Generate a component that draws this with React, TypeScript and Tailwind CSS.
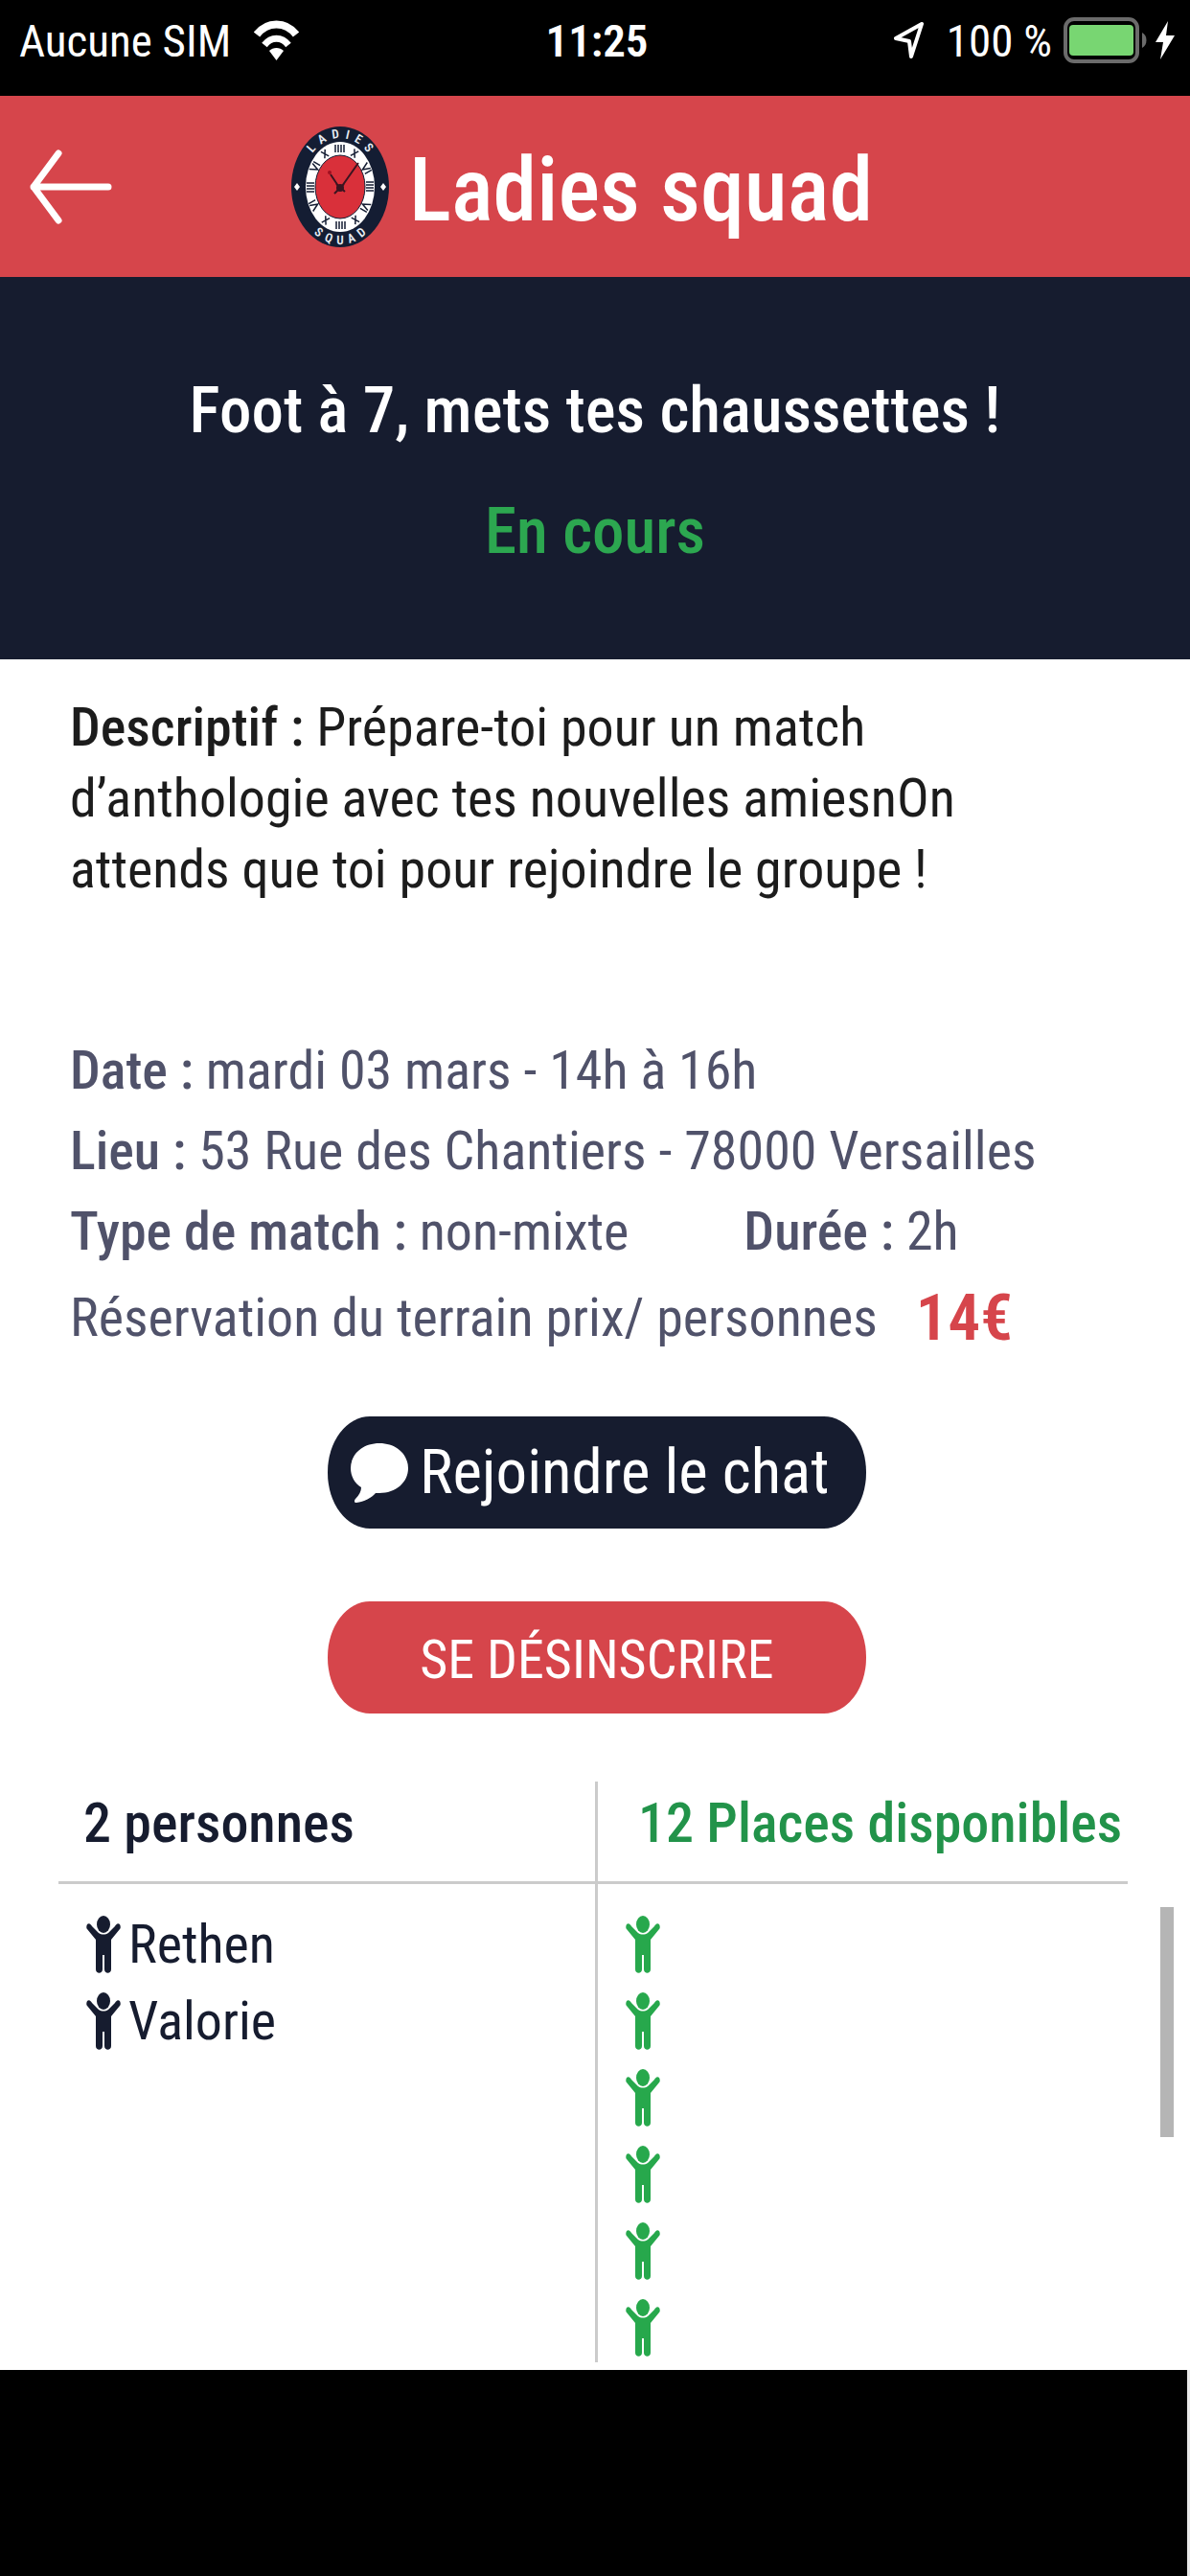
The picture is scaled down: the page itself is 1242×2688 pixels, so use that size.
import type { ReactNode } from "react";

const players = ["Rethen", "Valorie"];
const visibleRows = 6;

const hours = Array.from({ length: 12 }, (_, i) => i);

function StatusBar() {
  return (
    <div className="grid h-[100px] grid-cols-[1fr_auto_1fr] items-center bg-black pr-4 pb-4 pl-5 text-[47px] leading-none text-white">
      <div className="flex items-center gap-6">
        <span>Aucune SIM</span>
        <svg viewBox="0 0 47 42" className="h-[42px] w-[47px]" aria-hidden="true">
          <g fill="none" stroke="white" strokeWidth="8">
            <path d="M3 15C14 1 33 1 44 15" />
            <path d="M11 26C18 17 29 17 36 26" strokeWidth="7" />
          </g>
          <path d="M23.500 42L16 32C20 28 27 28 31 32Z" fill="white" />
        </svg>
      </div>
      <span className="font-semibold">11:25</span>
      <div className="flex items-center justify-end">
        <svg viewBox="0 0 31 38" className="mr-6 h-[38px] w-[31px]" aria-hidden="true">
          <path d="M29 2L2 17L16 20L18 36Z" fill="none" stroke="white" strokeWidth="4" strokeLinejoin="round" />
        </svg>
        <span className="mr-3">100 %</span>
        <svg viewBox="0 0 88 48" className="mr-2 h-12 w-[88px]" aria-hidden="true">
          <rect x="2" y="2" width="75" height="44" rx="9" fill="none" stroke="#6b6b6b" strokeWidth="4" />
          <rect x="6" y="8" width="67" height="32" rx="4" fill="#78d672" />
          <path d="M82 16C88 19 88 29 82 32Z" fill="#6b6b6b" />
        </svg>
        <svg viewBox="0 0 20 40" className="h-10 w-5" aria-hidden="true">
          <path d="M13 0L0 22H8L5 40L20 15H11Z" fill="white" />
        </svg>
      </div>
    </div>
  );
}

function Logo() {
  return (
    <svg viewBox="0 0 104 128" className="h-32 w-[104px] shrink-0" aria-hidden="true">
      <defs>
        <path id="logo-top" d="M12 64A40 51 0 0 1 92 64" />
        <path id="logo-bottom" d="M5 64A47 60 0 0 0 99 64" />
      </defs>
      <ellipse cx="52" cy="64" rx="51" ry="63" fill="#141d33" />
      <ellipse cx="52" cy="64" rx="36" ry="47" fill="white" />
      <ellipse cx="52" cy="64" rx="26" ry="33" fill="#d9303a" stroke="#141d33" strokeWidth="1" />
      {hours.map((hour) => {
        const angle = (hour * Math.PI) / 6;
        const x = 52 + Math.sin(angle) * 31;
        const y = 64 - Math.cos(angle) * 40;
        return (
          <g key={hour} transform={`translate(${x} ${y}) rotate(${hour * 30})`} stroke="#141d33" strokeWidth="1.500" fill="none">
            <path d={hour % 3 === 0 ? "M-5 -4V4M-2 -4V4M1 -4V4M4 -4V4" : hour % 2 === 0 ? "M-4 -4L0 4L3 -4M5 -4V4" : "M-3 -4L2 4M2 -4L-3 4"} />
          </g>
        );
      })}
      <path d="M52 66L71 39M52 66L42 51M46 71L56 61M48 61L57 69" stroke="#3a1420" strokeWidth="2" fill="none" />
      <circle cx="41" cy="49" r="2" fill="#a01020" />
      <circle cx="52" cy="65" r="4" fill="#3a1420" />
      <path d="M7 60L10 64L7 68L4 64ZM97 60L100 64L97 68L94 64Z" fill="white" />
      <g fill="#e9edf5" fontSize="13" fontWeight="600" textAnchor="middle">
        <text>
          <textPath href="#logo-top" startOffset="50%">L{"\u00a0\u00a0"}A{"\u00a0\u00a0"}D{"\u00a0\u00a0"}I{"\u00a0\u00a0"}E{"\u00a0\u00a0"}S</textPath>
        </text>
        <text>
          <textPath href="#logo-bottom" startOffset="50%">S{"\u00a0\u00a0"}Q{"\u00a0\u00a0"}U{"\u00a0\u00a0"}A{"\u00a0\u00a0"}D</textPath>
        </text>
      </g>
    </svg>
  );
}

function PersonIcon() {
  return (
    <svg viewBox="0 0 36 60" className="h-[60px] w-9 shrink-0" fill="currentColor" aria-hidden="true">
      <ellipse cx="18" cy="9" rx="7" ry="9" />
      <path d="M1 9C3 7 5 9 6 11L13 18C16 20 20 20 23 18L30 11C31 9 33 7 35 9C36 11 36 13 35 14L26 25V56C26 61 19 61 19 56V41H17V56C17 61 10 61 10 56V25L1 14C0 13 0 11 1 9Z" />
    </svg>
  );
}

function Label({ children }: { children: ReactNode }) {
  return <strong className="font-medium">{children}</strong>;
}

export default function App() {
  return (
    <div className="flex min-h-screen flex-col bg-white font-['Roboto_Condensed',Roboto,sans-serif]">
      <StatusBar />

      <header className="flex h-[189px] items-center bg-[#d6454b] pr-[146px] pl-[30px] text-white">
        <button type="button" aria-label="Retour">
          <svg viewBox="0 0 88 80" className="h-20 w-[88px]" aria-hidden="true">
            <path d="M31 5L5 40L31 75M5 40H83" fill="none" stroke="white" strokeWidth="7" strokeLinecap="round" strokeLinejoin="round" />
          </svg>
        </button>
        <div className="flex flex-1 items-center justify-center gap-5">
          <Logo />
          <h1 className="pt-2 text-[92px] leading-none font-medium">Ladies squad</h1>
        </div>
      </header>

      <section className="bg-[#161c2f] pt-[76px] pb-[71px] text-center text-[67px] leading-[126px]">
        <h2 className="font-medium text-white">Foot à 7, mets tes chaussettes !</h2>
        <p className="font-medium text-[#2ca750]">En cours</p>
      </section>

      <main className="relative pb-2 text-[56px]">
        <p className="mx-[73px] max-w-[960px] pt-[34px] leading-[74px] text-[#1c1c1c]">
          <Label>Descriptif :</Label> Prépare-toi pour un match d’anthologie avec tes nouvelles amiesnOn attends que toi
          pour rejoindre le groupe !
        </p>

        <div className="mx-[73px] mt-[131px] leading-[84px] text-[#50526a]">
          <p>
            <Label>Date :</Label> mardi 03 mars - 14h à 16h
          </p>
          <p>
            <Label>Lieu :</Label> 53 Rue des Chantiers - 78000 Versailles
          </p>
          <div className="flex gap-[120px]">
            <p>
              <Label>Type de match :</Label> non-mixte
            </p>
            <p>
              <Label>Durée :</Label> 2h
            </p>
          </div>
          <div className="flex h-24 items-center gap-10">
            <p>Réservation du terrain prix/ personnes</p>
            <span className="text-[67px] font-semibold text-[#d6454b]">14€</span>
          </div>
        </div>

        {/* Actions */}
        <div className="mt-[55px] flex flex-col items-center gap-[76px] pl-1">
          <button
            type="button"
            className="flex h-[117px] w-[562px] items-center gap-3 bg-[#161c2f] pl-6 text-[65px] text-white [border-radius:44px/58px]"
          >
            <svg viewBox="0 0 60 62" className="h-[62px] w-[60px]" fill="white" aria-hidden="true">
              <path d="M30 0C48 0 60 12 60 26C60 41 47 52 30 52H26C22 57 14 61 6 62C3 62 4 59 5 58C9 54 11 50 11 46C4 42 0 34 0 26C0 12 12 0 30 0Z" />
            </svg>
            Rejoindre le chat
          </button>
          <button
            type="button"
            className="h-[117px] w-[562px] bg-[#d6454b] pt-1 text-[56px] text-white [border-radius:44px/58px]"
          >
            SE DÉSINSCRIRE
          </button>
        </div>

        {/* Players */}
        <div className="mx-[61px] mt-[71px] pr-1">
          <table className="w-full table-fixed border-separate border-spacing-0 text-left leading-[72px]">
            <thead className="text-[58px]">
              <tr>
                <th className="w-[563px] border-r-3 border-b-3 border-[#cbcbcb] pt-[7px] pb-[25px] pl-[26px] font-medium text-[#161c2f]">
                  2 personnes
                </th>
                <th className="border-b-3 border-[#cbcbcb] pt-[7px] pb-[25px] pl-[42px] font-medium whitespace-nowrap text-[#22934a]">
                  12 Places disponibles
                </th>
              </tr>
            </thead>
            <tbody>
              {Array.from({ length: visibleRows }, (_, i) => (
                <tr key={i} className="[&>td]:pb-2 first:[&>td]:pt-[27px] last:[&>td]:pb-0">
                  <td className="border-r-3 border-[#cbcbcb] pl-[29px] text-[#161c2f]">
                    {players[i] && (
                      <div className="flex h-[72px] items-center gap-2">
                        <PersonIcon />
                        {players[i]}
                      </div>
                    )}
                  </td>
                  <td className="pl-[29px] text-[#27a84c]">
                    <div className="flex h-[72px] items-center">
                      <PersonIcon />
                    </div>
                  </td>
                </tr>
              ))}
            </tbody>
          </table>
        </div>

        {/* Scroll indicator */}
        <div className="absolute right-[17px] bottom-[243px] h-[240px] w-[14px] bg-[#b5b5b5]" />
      </main>

      <footer className="min-h-[215px] flex-1 border-r-3 border-[#e8e8e8] bg-black" />
    </div>
  );
}
